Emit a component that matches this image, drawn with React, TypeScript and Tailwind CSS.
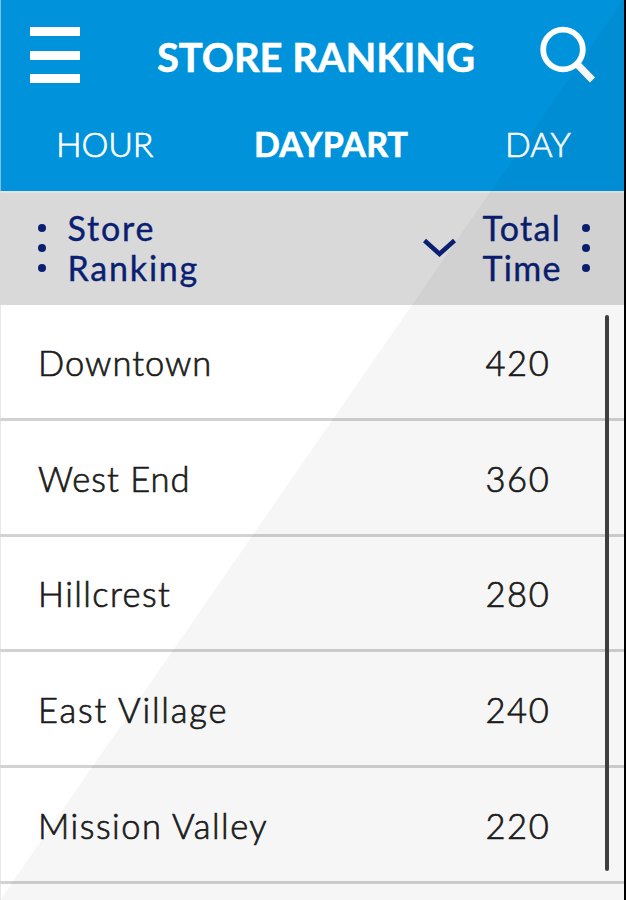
import React, { useState } from "react";

const stores = [
  { name: "Downtown", total: 420, nameSpacing: "tracking-[1px]" },
  { name: "West End", total: 360, nameSpacing: "tracking-[1px]" },
  { name: "Hillcrest", total: 280, nameSpacing: "tracking-[1.4px]" },
  { name: "East Village", total: 240, nameSpacing: "tracking-[1.8px]" },
  { name: "Mission Valley", total: 220, nameSpacing: "tracking-[1.5px]" },
];

const tabs = [
  { id: "hour", label: "HOUR", spacing: "tracking-[-0.2px] w-[98px]" },
  { id: "daypart", label: "DAYPART", spacing: "tracking-[0.2px] w-[151px]" },
  { id: "day", label: "DAY", spacing: "tracking-[0px] w-[67px]" },
];

const Dots = () => (
  <span className="flex flex-col gap-[12px]">
    <span className="size-[8px] rounded-full bg-[#0b1f72]" />
    <span className="size-[8px] rounded-full bg-[#0b1f72]" />
    <span className="size-[8px] rounded-full bg-[#0b1f72]" />
  </span>
);

const App = () => {
  const [activeTab, setActiveTab] = useState("daypart");

  return (
    <div className="relative h-[900px] w-[626px] overflow-hidden border-r-2 border-black bg-white font-['Lato',sans-serif]">
      {/* Header */}
      <header className="h-[191px] bg-[#0093db] text-white">
        <div className="flex h-[112px] items-start pl-[30px]">
          <button aria-label="Menu" className="mt-[27px] flex w-[50px] flex-col gap-[14.5px]">
            <span className="h-[9px] bg-white" />
            <span className="h-[9px] bg-white" />
            <span className="h-[9px] bg-white" />
          </button>
          <h1 className="ml-[77px] mt-[33px] w-[379px] whitespace-nowrap text-[40px] font-bold leading-[48px] tracking-[-0.1px] [-webkit-text-stroke:0.5px]">
            STORE RANKING
          </h1>
          <button aria-label="Search" className="mt-[24px]">
            <svg width="60" height="60" viewBox="0 0 60 60" fill="none" stroke="white" className="block">
              <circle cx="27" cy="25.5" r="19.8" strokeWidth="5.8" />
              <path d="M40.5 39.5 L56.500 56" strokeWidth="7.2" />
            </svg>
          </button>
        </div>
        <nav className="flex h-[63px] items-center justify-between pl-[56px] pr-[52px] text-[34px]">
          {tabs.map((tab) => (
            <button
              key={tab.id}
              onClick={() => setActiveTab(tab.id)}
              className={`${tab.spacing} whitespace-nowrap text-left ${
                activeTab === tab.id
                  ? "font-bold [-webkit-text-stroke:0.6px]"
                  : "font-light [-webkit-text-stroke:0.7px]"
              }`}
            >
              {tab.label}
            </button>
          ))}
        </nav>
      </header>

      {/* Column titles */}
      <div className="flex h-[114px] items-center border-t-2 border-[#e4e4e4] bg-[#d9d9d9] pl-[38px] text-[34px] leading-[40px] text-[#0b1f72] [-webkit-text-stroke:0.4px]">
        <div className="pb-[2px]">
          <Dots />
        </div>
        <div className="ml-[21.5px] w-[355.5px] pb-[2px] tracking-[1.8px]">
          Store
          <br />
          Ranking
        </div>
        <svg width="34" height="20" viewBox="0 0 34 20" fill="none" stroke="#0b1f72" strokeWidth="4.5" className="mb-[2px]">
          <path d="M1.500 2.500 L16.500 16 L31.500 2.500" />
        </svg>
        <div className="ml-[25.5px] w-[99.5px] pb-[2px] tracking-[1.3px]">
          Total
          <br />
          Time
        </div>
        <div className="pb-[2px]">
          <Dots />
        </div>
      </div>

      {/* Store rows */}
      <ul className="text-[34.5px] font-light leading-[40px] text-[#1c1c1c] [-webkit-text-stroke:0.7px]">
        {stores.map((store) => (
          <li key={store.name} className="flex h-[115.8px] items-center border-b-[3px] border-[#d2d2d2] pl-[38px] pt-[3px]">
            <span className={`${store.nameSpacing} w-[447.5px]`}>{store.name}</span>
            <span className="tracking-[1.6px]">{store.total}</span>
          </li>
        ))}
      </ul>

      {/* Scrollbar */}
      <div className="absolute left-[604.500px] top-[315px] h-[556px] w-[4px] rounded-full bg-[#414141]" />

      {/* Diagonal shade over the right half of the screen */}
      <svg className="pointer-events-none absolute inset-0" width="624" height="900" viewBox="0 0 624 900">
        <path d="M623 0 H624 V900 H0 Z" fill="black" fillOpacity="0.035" />
      </svg>

      {/* Screen edge */}
      <div className="pointer-events-none absolute inset-y-0 left-0 w-px bg-[#d9d9d9]/60" />
    </div>
  );
};

export default App;
